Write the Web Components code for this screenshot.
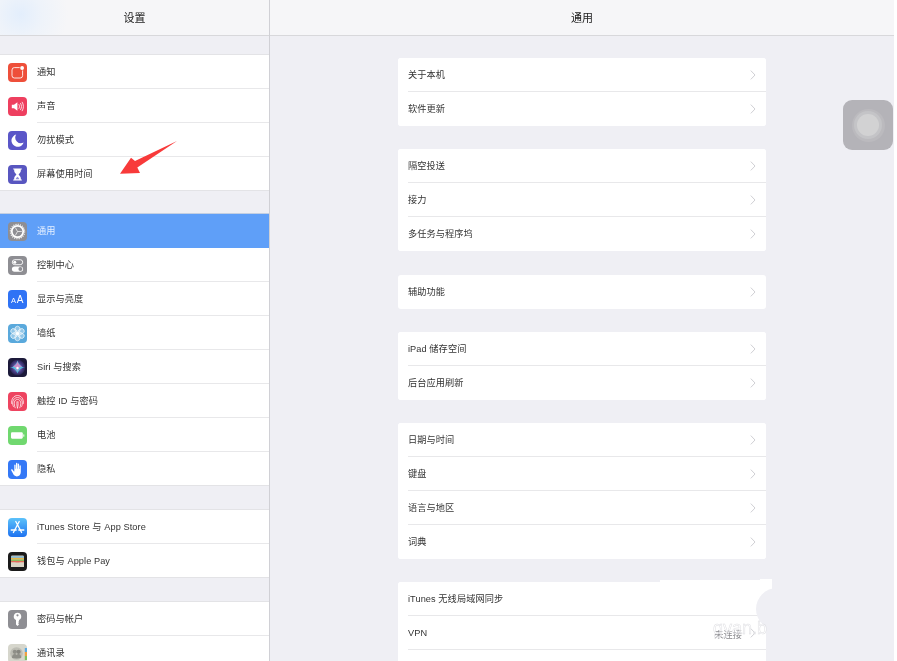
<!DOCTYPE html>
<html lang="zh-CN"><head><meta charset="utf-8"><title>设置</title>
<style>
html,body{margin:0;padding:0;background:#fff;height:661px;overflow:hidden;font-family:"Liberation Sans","Noto Sans CJK SC",sans-serif;}
</style></head><body>
<ios-app>
  <ios-pane slot="side" heading="设置" kind="side">
    <ios-group style="margin-top:18px">
      <ios-row icon="notify">通知</ios-row>
      <ios-row icon="sound">声音</ios-row>
      <ios-row icon="moon">勿扰模式</ios-row>
      <ios-row icon="hourglass">屏幕使用时间</ios-row>
    </ios-group>
    <ios-group style="margin-top:22px;border-top-color:#c3cfe2">
      <ios-row icon="gear" selected>通用</ios-row>
      <ios-row icon="toggles">控制中心</ios-row>
      <ios-row icon="aa">显示与亮度</ios-row>
      <ios-row icon="flower">墙纸</ios-row>
      <ios-row icon="siri">Siri 与搜索</ios-row>
      <ios-row icon="finger">触控 ID 与密码</ios-row>
      <ios-row icon="battery">电池</ios-row>
      <ios-row icon="hand">隐私</ios-row>
    </ios-group>
    <ios-group style="margin-top:23px">
      <ios-row icon="store">iTunes Store 与 App Store</ios-row>
      <ios-row icon="wallet">钱包与 Apple Pay</ios-row>
    </ios-group>
    <ios-group style="margin-top:23px">
      <ios-row icon="key">密码与帐户</ios-row>
      <ios-row icon="contacts">通讯录</ios-row>
    </ios-group>
  </ios-pane>
  <ios-pane slot="main" heading="通用" kind="main">
    <ios-card style="margin-top:22px">
      <ios-row card chevron>关于本机</ios-row>
      <ios-row card chevron>软件更新</ios-row>
    </ios-card>
    <ios-card>
      <ios-row card chevron>隔空投送</ios-row>
      <ios-row card chevron>接力</ios-row>
      <ios-row card chevron>多任务与程序坞</ios-row>
    </ios-card>
    <ios-card style="margin-top:24px">
      <ios-row card chevron>辅助功能</ios-row>
    </ios-card>
    <ios-card>
      <ios-row card chevron>iPad 储存空间</ios-row>
      <ios-row card chevron>后台应用刷新</ios-row>
    </ios-card>
    <ios-card>
      <ios-row card chevron>日期与时间</ios-row>
      <ios-row card chevron>键盘</ios-row>
      <ios-row card chevron>语言与地区</ios-row>
      <ios-row card chevron>词典</ios-row>
    </ios-card>
    <ios-card>
      <ios-row card>iTunes 无线局域网同步</ios-row>
      <ios-row card chevron value="未连接">VPN</ios-row>
      <ios-row card></ios-row>
    </ios-card>
  </ios-pane>
  <red-arrow slot="over"></red-arrow>
  <touch-button slot="over"></touch-button>
  <water-mark slot="over"></water-mark>
</ios-app>
<script>
const ICONS = {
notify:`<rect width="19" height="19" rx="4" fill="#ee4f3a"/><rect x="4" y="4.6" width="10.6" height="10.4" rx="2.4" fill="none" stroke="#fff" stroke-opacity=".85" stroke-width="1"/><circle cx="14.1" cy="5" r="2.5" fill="#ee4f3a"/><circle cx="14.1" cy="5" r="1.9" fill="#fff"/>`,
sound:`<rect width="19" height="19" rx="4" fill="#ee3f5f"/><path d="M3.8 7.8h2.2l3.4-2.6v8.6l-3.4-2.6H3.8z" fill="#fff"/><path d="M11 7.6c.7 1.1.7 2.7 0 3.8M12.6 6.4c1.2 1.9 1.2 4.3 0 6.2M14.2 5.2c1.7 2.6 1.7 6 0 8.6" fill="none" stroke="#fff" stroke-width=".8" stroke-linecap="round"/>`,
moon:`<rect width="19" height="19" rx="4" fill="#5a56c8"/><path d="M8.2 3.6a6.2 6.2 0 1 0 7.4 7.9 5.6 5.6 0 0 1-7.4-7.9z" fill="#fff"/>`,
hourglass:`<rect width="19" height="19" rx="4" fill="#5856c0"/><path d="M5.2 3.4h8.6v1.2h-1v1.300c0 1.600-1.700 2.500-2.200 3.600.5 1.100 2.200 2 2.200 3.600v1.300h1v1.200H5.200v-1.200h1v-1.300c0-1.600 1.700-2.500 2.200-3.600C7.900 8.400 6.200 7.500 6.200 5.900V4.600h-1z" fill="#fff"/><path d="M7.600 14.300c.4-1.300 1.300-1.700 1.900-2.500.6.800 1.500 1.200 1.900 2.500z" fill="#8f8ddb"/>`,
gear:`<rect width="19" height="19" rx="4" fill="#8e8e93"/><circle cx="9.5" cy="9.5" r="5.7" fill="none" stroke="#fff" stroke-width="1.700"/><circle cx="9.5" cy="9.5" r="7.100" fill="none" stroke="#fff" stroke-width="1.300" stroke-dasharray="1 1.230"/><path d="M9.500 9.500 13.800 9.500M9.500 9.500 7.300 5.500M9.500 9.500 7.300 13.500" stroke="#f2f2f2" stroke-width=".8"/>`,
toggles:`<rect width="19" height="19" rx="4" fill="#8e8e93"/><rect x="4.3" y="3.700" width="10.400" height="5" rx="2.500" fill="none" stroke="#fff" stroke-width=".9"/><circle cx="6.800" cy="6.200" r="1.500" fill="#fff"/><rect x="3.900" y="10.400" width="11.200" height="5.400" rx="2.700" fill="#fff"/><circle cx="12.400" cy="13.100" r="2" fill="#8e8e93"/>`,
aa:`<rect width="19" height="19" rx="4" fill="#2f73f5"/><text x="3" y="13" font-family="Liberation Sans" font-size="7.500" fill="#fff">A</text><text x="8.700" y="13.300" font-family="Liberation Sans" font-size="10" fill="#fff">A</text>`,
flower:`<rect width="19" height="19" rx="4" fill="#5aa9dc"/><g fill="#fff" fill-opacity=".35" stroke="#fff" stroke-width=".6"><ellipse cx="9.500" cy="5.500" rx="2.700" ry="3.300"/><ellipse cx="9.500" cy="13.500" rx="2.700" ry="3.300"/><ellipse cx="5.900" cy="7.500" rx="2.700" ry="3.300" transform="rotate(-60 5.900 7.500)"/><ellipse cx="13.100" cy="7.500" rx="2.700" ry="3.300" transform="rotate(60 13.100 7.500)"/><ellipse cx="5.900" cy="11.500" rx="2.700" ry="3.300" transform="rotate(60 5.900 11.500)"/><ellipse cx="13.100" cy="11.500" rx="2.700" ry="3.300" transform="rotate(-60 13.100 11.500)"/></g><circle cx="9.500" cy="9.500" r="1.500" fill="#fff"/>`,
siri:`<defs><radialGradient id="s1" cx=".5" cy=".5" r=".55"><stop offset="0" stop-color="#a9a0e0"/><stop offset=".6" stop-color="#4a3f86"/><stop offset="1" stop-color="#1d1a40"/></radialGradient></defs><rect width="19" height="19" rx="4" fill="#1c1a3a"/><circle cx="9.500" cy="9.500" r="7.800" fill="url(#s1)"/><path d="M1.800 10c3.500-.4 5.800.6 7.700 5.500 1.900-4.900 4.200-5.900 7.700-5.500-3.400-.8-5.800-2.500-7.700-7.500C7.600 7.500 5.200 9.200 1.800 10z" fill="#4fd6ee" fill-opacity=".8"/><path d="M5 8.500c2.200.4 3.500 1.500 4.500 5 1-3.500 2.300-4.600 4.500-5-2-.8-3.500-2-4.500-5-1 3-2.500 4.200-4.500 5z" fill="#f27cc0" fill-opacity=".75"/><circle cx="9.500" cy="10" r="1.200" fill="#fff"/>`,
finger:`<rect width="19" height="19" rx="4" fill="#ee4460"/><g fill="none" stroke="#fff" stroke-opacity=".8" stroke-width=".9" stroke-linecap="round"><path d="M3.600 11.500c-.6-4.500 2.300-8 5.900-8s6.500 3.500 5.900 8"/><path d="M5.400 14.500c-.9-1.800-.8-3.300-.6-4.800.4-2.300 2.300-4.200 4.700-4.200s4.300 1.900 4.700 4.200c.2 1.500.3 3-.6 4.800"/><path d="M7.200 15.800c-.8-1.900-1.100-3.800-.8-5.700.3-1.500 1.600-2.700 3.100-2.700s2.800 1.200 3.100 2.700c.3 1.900 0 3.800-.8 5.700"/><path d="M9.500 16c-.6-2-.8-3.800-.5-6.300M9.500 16c.6-2 .8-3.800.5-6.300"/></g>`,
battery:`<rect width="19" height="19" rx="4" fill="#70d86f"/><rect x="3" y="6.300" width="11.800" height="6.400" rx="1.100" fill="#fff"/><rect x="15.300" y="8.300" width="1" height="2.400" rx=".5" fill="#fff"/>`,
hand:`<rect width="19" height="19" rx="4" fill="#3478f6"/><path d="M6.300 5.200c0-.9 1.300-.9 1.300 0v3.600h.4V3.500c0-.9 1.400-.9 1.400 0v5.300h.4V4.200c0-.9 1.300-.9 1.300 0v4.900h.4V6c0-.9 1.300-.9 1.300 0v6c0 2.700-1.600 4.400-4 4.400-2 0-3-1-3.800-2.800L3.200 10.300c-.4-.9.700-1.500 1.300-.7l1.400 1.800h.4z" fill="#fff"/>`,
store:`<defs><linearGradient id="s2" x1="0" y1="0" x2="0" y2="1"><stop offset="0" stop-color="#5cc2fa"/><stop offset="1" stop-color="#1e72f0"/></linearGradient></defs><rect width="19" height="19" rx="4" fill="url(#s2)"/><g stroke="#fff" stroke-width="1.300" stroke-linecap="round" fill="none"><path d="M7.800 3.500 13.600 14.500M11.200 3.500 5.400 14.500"/><path d="M3.200 12h5M10.800 12H15.800"/></g>`,
wallet:`<rect width="19" height="19" rx="4" fill="#1a1a1a"/><rect x="3" y="3.500" width="13" height="11.500" rx="1.200" fill="#d9d4c5"/><rect x="3" y="4.300" width="13" height="1.600" fill="#7fb8d8"/><rect x="3" y="5.900" width="13" height="1.600" fill="#e8b54a"/><rect x="3" y="7.500" width="13" height="1.500" fill="#8cbb5c"/><rect x="3" y="9" width="13" height="1.500" fill="#e46a5a"/><path d="M3 10.500h4.500c.4 1.300 1 1.800 2 1.800s1.600-.5 2-1.800H16V15H3z" fill="#d9d4c5"/>`,
key:`<rect width="19" height="19" rx="4" fill="#8e8e93"/><path d="M9.500 2.800a3.700 3.700 0 0 1 1.500 7.100v1.300l-.8.800.8.800-.8.800.8.800-1.500 1.500-1.500-1.300V9.900A3.700 3.700 0 0 1 9.500 2.800z" fill="#fff"/><circle cx="9.500" cy="5.300" r="1.100" fill="#8e8e93"/>`,
contacts:`<rect width="19" height="19" rx="4" fill="#d6d6cc"/><rect x="16.800" y="4" width="2.200" height="4" fill="#5aa8e0"/><rect x="16.800" y="8" width="2.200" height="4" fill="#f0a040"/><rect x="16.800" y="12" width="2.200" height="4" fill="#7fc060"/><circle cx="8.500" cy="9.500" r="6.300" fill="#bdbdb4"/><circle cx="6.800" cy="7.800" r="2.100" fill="#8f8f88"/><circle cx="10.600" cy="7.800" r="2.100" fill="#86867f"/><path d="M4 14c0-3 1.300-4 2.800-4s2.400 1 2.400 4.500zM8 14.500c0-3.500 1.100-4.500 2.600-4.500s2.600 1 2.600 4z" fill="#8f8f88"/>`
};
function shadow(el, html){ el.attachShadow({mode:'open'}).innerHTML = html; }

customElements.define('ios-app', class extends HTMLElement{
  constructor(){super();shadow(this,`<style>
  :host{display:block;position:relative;width:894px;height:661px;overflow:hidden;background:#efeff4;color:#333;filter:blur(.3px);}
  .wrap{display:flex;height:100%;}
  </style><div class="wrap"><slot name="side"></slot><slot name="main"></slot></div><slot name="over"></slot>`);}
});

customElements.define('ios-pane', class extends HTMLElement{
  constructor(){super();shadow(this,`<style>
  :host{display:block;height:661px;overflow:hidden;background:#efeff4;box-sizing:border-box;}
  :host([kind=side]){width:270px;border-right:1px solid #d0d0d5;}
  :host([kind=main]){width:624px;}
  header{height:35px;box-sizing:content-box;border-bottom:1px solid #d8d8db;background:#f6f6f8;display:flex;align-items:center;justify-content:center;
    font-size:11px;color:#222;line-height:1;}
  header span{padding-top:2px;}
  :host([kind=side]) header{background:radial-gradient(circle at 20px 14px,#e3eefc 0,#eef3fa 22px,#f6f6f8 48px);}
  .body{display:flex;flex-direction:column;}
  :host([kind=main]) .body{align-items:center;}
  </style><header><span id="t"></span></header><div class="body"><slot></slot></div>`);}
  connectedCallback(){this.shadowRoot.getElementById('t').textContent=this.getAttribute('heading');}
});

customElements.define('ios-group', class extends HTMLElement{
  constructor(){super();shadow(this,`<style>
  :host{display:block;background:#fff;border-top:1px solid #e3e3e6;}
  </style><slot></slot>`);}
});

customElements.define('ios-card', class extends HTMLElement{
  constructor(){super();shadow(this,`<style>
  :host{display:block;width:368px;background:#fff;border-radius:3px;margin-top:23px;overflow:hidden;}
  </style><slot></slot>`);}
});

customElements.define('ios-icon', class extends HTMLElement{
  constructor(){super();shadow(this,`<style>:host{display:block;width:19px;height:19px;flex:none}svg{display:block}</style><svg id="s" width="19" height="19" viewBox="0 0 19 19"></svg>`);}
  connectedCallback(){this.shadowRoot.getElementById('s').innerHTML=ICONS[this.getAttribute('name')]||'';}
});

customElements.define('ios-row', class extends HTMLElement{
  constructor(){super();shadow(this,`<style>
  :host{display:flex;align-items:center;height:34px;box-sizing:border-box;font-size:9.2px;color:#333;background:#fff;padding-left:8px;}
  :host([card]){padding-left:10px;}
  :host([selected]){background:#5f9ff8;color:#e6f0ff;}
  :host(:last-child){box-shadow:inset 0 -1px 0 #e3e3e6;}
  :host([card]:last-child){box-shadow:none;}
  ios-icon{margin-right:10px;}
  .body{flex:1;height:100%;display:flex;align-items:center;box-sizing:border-box;border-bottom:1px solid #e8e8ea;padding:0 10px 0 0;letter-spacing:.08px;}
  :host(:last-child) .body,:host([selected]) .body{border-bottom-color:transparent;}
  .label{flex:1;white-space:nowrap;line-height:1;padding-top:3px;}
  .value{color:#8a8a8e;margin-right:8px;padding-top:3px;}
  svg{display:block;flex:none;}
  </style><span id="ic" style="display:contents"></span><div class="body"><span class="label"><slot></slot></span><span class="value" id="v"></span><span id="c" style="display:contents"></span></div>`);}
  connectedCallback(){
    const n=this.getAttribute('icon');
    if(n) this.shadowRoot.getElementById('ic').innerHTML=`<ios-icon name="${n}"></ios-icon>`;
    const v=this.getAttribute('value');
    if(v) this.shadowRoot.getElementById('v').textContent=v;
    if(this.hasAttribute('chevron')) this.shadowRoot.getElementById('c').innerHTML=
      `<svg width="6" height="10" viewBox="0 0 6 10"><path d="M.8.6 5 5 .8 9.400" fill="none" stroke="#cbcbcf" stroke-width=".9"/></svg>`;
  }
});

customElements.define('red-arrow', class extends HTMLElement{
  constructor(){super();shadow(this,`<style>:host{position:absolute;left:110px;top:135px;width:75px;height:45px;pointer-events:none}svg{display:block}</style>
  <svg width="75" height="45" viewBox="110 135 75 45"><path d="M177 141 135 161 131 157.700 120 173.700 140 173 137.300 167.500z" fill="#f83a3a"/></svg>`);}
});

customElements.define('touch-button', class extends HTMLElement{
  constructor(){super();shadow(this,`<style>:host{position:absolute;left:843px;top:100px;width:50px;height:50px;border-radius:9px;background:#b4b3b8;display:grid;place-items:center;}
  .a,.b,.c{grid-area:1/1;border-radius:50%;}
  .a{width:33px;height:33px;background:#bbbabe}.b{width:28px;height:28px;background:#c4c4c7}.c{width:22px;height:22px;background:#d2d2d3}
  </style><div class="a"></div><div class="b"></div><div class="c"></div>`);}
});

customElements.define('water-mark', class extends HTMLElement{
  constructor(){super();shadow(this,`<style>:host{position:absolute;left:660px;top:570px;width:140px;height:91px;pointer-events:none}
  svg{display:block}text{font-family:"Liberation Sans",sans-serif;font-size:18px;fill:#fff;fill-opacity:.35;stroke:#dedee2;stroke-width:.5}
  </style><svg width="140" height="91" viewBox="660 570 140 91">
  <rect x="660" y="580" width="112" height="3" fill="#fff"/>
  <rect x="760" y="579" width="12" height="24" fill="#fff"/>
  <circle cx="777" cy="609" r="21" fill="#efeff4"/>
  <rect x="772" y="570" width="28" height="91" fill="#efeff4"/>
  <text x="713" y="634">gyan.b</text></svg>`);}
});
</script>
</body></html>
